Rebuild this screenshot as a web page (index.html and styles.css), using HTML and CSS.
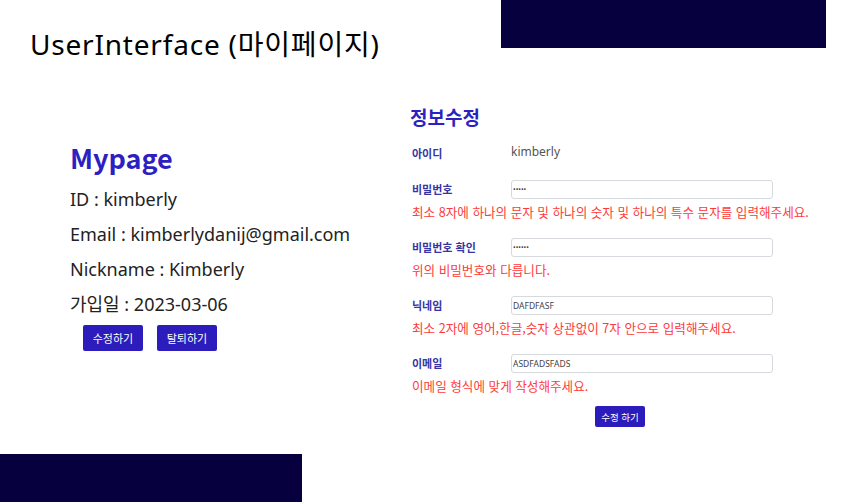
FILE: index.html
```html
<!DOCTYPE html>
<html lang="ko">
<head>
<meta charset="utf-8">
<title>UserInterface (마이페이지)</title>
<link rel="stylesheet" href="styles.css">
</head>
<body>
<div class="page">
  <div class="bar bar-top"></div>
  <div class="bar bar-bottom"></div>
  <h1 class="title">UserInterface (마이페이지)</h1>
  <main class="main">
    <section class="profile">
      <h2 class="profile-heading">Mypage</h2>
      <p class="info">ID : kimberly</p>
      <p class="info">Email : kimberlydanij@gmail.com</p>
      <p class="info">Nickname : Kimberly</p>
      <p class="info">가입일 : 2023-03-06</p>
      <div class="profile-actions">
        <button class="btn btn-lg">수정하기</button>
        <button class="btn btn-lg">탈퇴하기</button>
      </div>
    </section>
    <section class="edit">
      <h2 class="edit-heading">정보수정</h2>
      <div class="field field-id">
        <div class="row">
          <span class="label">아이디</span>
          <span class="value">kimberly</span>
        </div>
      </div>
      <div class="field">
        <div class="row">
          <span class="label">비밀번호</span>
          <input class="input pw" type="password" value="12345">
        </div>
        <p class="error">최소 8자에 하나의 문자 및 하나의 숫자 및 하나의 특수 문자를 입력해주세요.</p>
      </div>
      <div class="field">
        <div class="row">
          <span class="label">비밀번호 확인</span>
          <input class="input pw" type="password" value="123456">
        </div>
        <p class="error">위의 비밀번호와 다릅니다.</p>
      </div>
      <div class="field">
        <div class="row">
          <span class="label">닉네임</span>
          <input class="input" type="text" value="DAFDFASF">
        </div>
        <p class="error">최소 2자에 영어,한글,숫자 상관없이 7자 안으로 입력해주세요.</p>
      </div>
      <div class="field">
        <div class="row">
          <span class="label">이메일</span>
          <input class="input" type="text" value="ASDFADSFADS">
        </div>
        <p class="error">이메일 형식에 맞게 작성해주세요.</p>
      </div>
      <div class="submit-wrap">
        <button class="btn btn-sm">수정 하기</button>
      </div>
    </section>
  </main>
</div>
</body>
</html>
```

FILE: styles.css
```css
* { box-sizing: border-box; }
html, body { margin: 0; padding: 0; }
body {
  width: 843px;
  height: 502px;
  overflow: hidden;
  background: #fff;
  font-family: "Noto Sans", "Noto Sans CJK KR", sans-serif;
  color: #222;
}
.page {
  position: relative;
  width: 843px;
  height: 502px;
}
.bar {
  position: absolute;
  background: #06003f;
}
.bar-top { left: 501px; top: 0; width: 325px; height: 48px; }
.bar-bottom { left: 0; top: 454px; width: 302px; height: 48px; }

.title {
  margin: 0;
  padding: 25px 0 0 30px;
  font-family: "Noto Sans", "Noto Sans CJK KR", sans-serif;
  font-weight: 400;
  font-size: 28px;
  line-height: 38px;
  color: #000;
  letter-spacing: 0.8px;
}
.main {
  display: flex;
  padding-top: 40px;
}
.profile {
  width: 410px;
  padding: 38px 0 0 70px;
}
.profile-heading {
  margin: 0 0 7px;
  font-family: "Noto Sans CJK KR", sans-serif;
  font-weight: 700;
  font-size: 27px;
  line-height: 34px;
  color: #2e1fc1;
}
.info {
  margin: 0;
  font-family: "Noto Sans", "Noto Sans CJK KR", sans-serif;
  font-size: 18px;
  line-height: 35px;
  color: #222;
}
.profile-actions {
  display: flex;
  gap: 14px;
  padding: 3px 0 0 13px;
}
.btn {
  border: none;
  background: #2c1cbb;
  color: #fff;
  border-radius: 2px;
  font-family: "Noto Sans CJK KR", sans-serif;
  cursor: pointer;
  padding: 0;
}
.btn-lg { width: 60px; height: 26px; font-size: 11px; }
.btn-sm { width: 50px; height: 21px; font-size: 9.5px; }

.edit {
  width: 420px;
}
.edit-heading {
  margin: 0;
  font-family: "Noto Sans CJK KR", sans-serif;
  font-weight: 700;
  font-size: 19px;
  line-height: 28px;
  color: #2e1fc1;
}
.field { margin-top: 17.5px; }
.field-id { margin-top: 12px; margin-bottom: 4.5px; }
.row {
  display: flex;
  align-items: center;
  height: 19px;
  padding-left: 2px;
}
.label {
  width: 99px;
  font-family: "Noto Sans CJK KR", sans-serif;
  font-weight: 700;
  font-size: 11px;
  color: #3535a5;
}
.value {
  font-family: "Noto Sans", sans-serif;
  font-size: 12px;
  color: #555;
  margin-top: -2px;
}
.input {
  width: 262px;
  height: 19px;
  border: 1px solid #d6d9de;
  border-radius: 3px;
  padding: 0 1px;
  font-family: "Noto Sans", sans-serif;
  font-size: 8.5px;
  color: #444;
  background: #fff;
  outline: none;
}
.input.pw { font-size: 7px; letter-spacing: 0; }
.error {
  margin: 4.5px 0 0;
  padding-left: 2px;
  font-family: "Noto Sans CJK KR", sans-serif;
  font-size: 12.6px;
  line-height: 17px;
  color: #ff3a3a;
}
.submit-wrap {
  display: flex;
  padding: 12px 0 0 185px;
}
```
